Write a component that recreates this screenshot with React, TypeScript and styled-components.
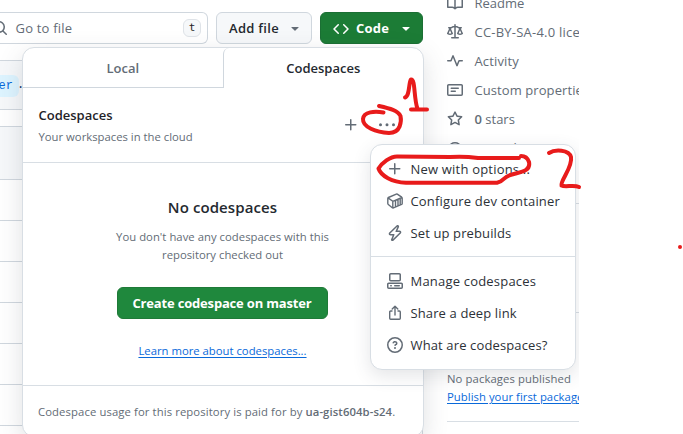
import React from "react";
import styled, { createGlobalStyle, css } from "styled-components";

const GlobalStyle = createGlobalStyle`
  * { box-sizing: border-box; }
  body { margin: 0; background: #fff; overflow: hidden; }
`;

const Screen = styled.div`
  position: relative;
  width: 683px;
  height: 434px;
  overflow: hidden;
  background: #fff;
  color: #1f2328;
  font: 400 13px/20px "Open Sans", "Noto Sans", sans-serif;
`;

const Page = styled.div`
  position: relative;
  display: flex;
  width: 579px;
  height: 434px;
  overflow: hidden;
`;

const Label = styled.span<{ $track?: number }>`
  white-space: nowrap;
  letter-spacing: ${(p) => p.$track ?? 0}px;
`;

const Main = styled.main`
  width: 423px;
  flex: none;
  padding-top: 12px;
`;

const Toolbar = styled.div`
  display: flex;
  height: 32px;
`;

const SearchBox = styled.div`
  display: flex;
  align-items: center;
  width: 208px;
  margin-right: 8px;
  padding-right: 6px;
  border: 1px solid #d0d7de;
  border-left: 0;
  border-radius: 0 6px 6px 0;
  color: #636c76;

  svg { margin-left: -8px; margin-right: 7.5px; }
`;

const Key = styled.kbd`
  width: 18px;
  height: 18px;
  margin-left: auto;
  border: 1px solid #dfe3e8;
  border-radius: 6px;
  background: #f6f8fa;
  color: #1f2328;
  font: 11px/15px "DejaVu Sans Mono", monospace;
  text-align: center;
`;

const Button = styled.button<{ $kind: "plain" | "primary" | "create" }>`
  display: flex;
  align-items: center;
  height: 32px;
  margin: 0;
  padding: 0 0 1px;
  border: 1px solid #d0d7de;
  border-radius: 6px;
  background: #f6f8fa;
  color: #24292f;
  font: 600 13px/20px "Open Sans", "Noto Sans", sans-serif;

  ${(p) => p.$kind === "plain" && css`
    width: 96px;
    margin-right: 8px;
    padding-left: 12px;
    svg { margin-left: auto; margin-right: 8px; color: #636c76; }
  `}
  ${(p) => p.$kind === "primary" && css`
    width: 103px;
    padding-left: 12px;
    border-color: #1b6f34;
    background: #1c7c36;
    color: #fff;
    font-weight: 700;
    svg:first-child { margin: 2px 7px 0 0; }
    svg:last-child { margin-left: auto; margin-right: 8px; }
  `}
  ${(p) => p.$kind === "create" && css`
    width: 211px;
    justify-content: center;
    margin: 23px 1px 23px 0;
    border-color: #1f7a38;
    background: #1f883d;
    color: #fff;
    font-weight: 700;
  `}
`;

const CommitBar = styled.div`
  display: flex;
  align-items: center;
  height: 50px;
  margin-top: 16px;
  border: solid #d0d7de;
  border-width: 1px 0;
  background: #f6f8fa;
  font: 12px/20px "Liberation Mono", monospace;
  color: #0a3069;
`;

const CodeChip = styled.span`
  display: flex;
  justify-content: flex-end;
  align-items: center;
  width: 19px;
  height: 22px;
  margin: 2px -2px 0 0;
  padding-right: 6px;
  border-radius: 0 6px 6px 0;
  background: #ddf4ff;
  color: #0969da;
`;

const Files = styled.div`
  margin-top: 16px;
  border: solid #d0d7de;
  border-width: 1px 1px 0 0;
`;

const FileRow = styled.div<{ $head?: boolean }>`
  height: ${(p) => (p.$head ? 53 : 41)}px;
  border-bottom: 1px solid #d0d7de;
  background: ${(p) => (p.$head ? "#f6f8fa" : "#fff")};
`;

const Sidebar = styled.aside`
  flex: none;
  width: 180px;
  margin-left: 24px;
  color: #636c76;
`;

const Facts = styled.ul`
  height: 211px;
  margin: -7px 0 0;
  padding: 0;
  list-style: none;
  border-bottom: 1px solid #d8dee4;
`;

const Fact = styled.li`
  display: flex;
  align-items: center;
  gap: 11.5px;
  height: 20px;
  margin-bottom: 9px;
  b { font-weight: 600; }
`;

const Releases = styled.div`
  height: 109px;
  border-bottom: 1px solid #d8dee4;
`;

const Packages = styled.div`
  display: flex;
  flex-direction: column;
  height: 109px;
  padding-top: 57px;
  border-bottom: 1px solid #d8dee4;
  font-size: 11.3px;
  line-height: 18px;
`;

const Link = styled.a<{ $track?: number }>`
  color: #0969da;
  letter-spacing: ${(p) => p.$track ?? 0}px;
  text-decoration: underline;
  text-underline-offset: 2px;
  white-space: nowrap;
`;

const Popover = styled.section`
  position: absolute;
  left: 22px;
  top: 47px;
  width: 402px;
  height: 390px;
  border: 1px solid #d8dee4;
  border-radius: 12px;
  background: #fff;
  box-shadow: 0 8px 24px rgba(66, 74, 83, 0.17);
`;

const Tabs = styled.div`
  display: flex;
  height: 40px;
`;

const Tab = styled.div<{ $active?: boolean }>`
  flex: 1;
  font-weight: 600;
  line-height: 41px;
  text-align: center;
  color: ${(p) => (p.$active ? "#24292f" : "#636c76")};
  ${(p) => p.$active
    ? css`border-left: 1px solid #d0d7de; border-radius: 6px 0 0 0;`
    : css`border-bottom: 1px solid #d0d7de;`}
`;

const Heading = styled.header`
  display: flex;
  align-items: center;
  height: 75px;
  padding: 0 28px 0 15.5px;
  border-bottom: 1px solid #d8dee4;
  color: #636c76;
`;

const Titles = styled.div`
  display: flex;
  flex-direction: column;
  flex: 1;
  margin-top: 2px;
  font-size: 11.3px;
`;

const Title = styled(Label)`
  line-height: 20px;
  margin-bottom: 2px;
  color: #1f2328;
  font-size: 13px;
  font-weight: 600;
`;

const Actions = styled.div`
  display: flex;
  gap: 20px;
  margin-top: -1px;
`;

const Blank = styled.div`
  display: flex;
  flex-direction: column;
  align-items: center;
  height: 223px;
  padding: 33px 1px 0 0;
  border-bottom: 1px solid #d8dee4;
  color: #636c76;
  font-size: 11.3px;
  line-height: 18px;
`;

const BlankTitle = styled.h4`
  margin: -1px 0 9px;
  color: #24292f;
  font-size: 15px;
  font-weight: 600;
  line-height: 24px;
`;

const Footer = styled.footer`
  padding: 16px 15px;
  color: #636c76;
  font-size: 11.3px;
  b { font-weight: 600; }
`;

const Menu = styled.div`
  position: absolute;
  left: 370px;
  top: 144px;
  width: 206px;
  height: 226px;
  padding: 8px 0;
  border: 1px solid #d8dee4;
  border-radius: 12px;
  background: #fff;
  box-shadow: 0 6px 18px rgba(66, 74, 83, 0.14);
`;

const MenuItem = styled.div`
  display: flex;
  align-items: center;
  gap: 7.5px;
  height: 32px;
  padding-left: 16px;
  color: #2c3137;
  svg { color: #636c76; }
`;

const Divider = styled.hr`
  height: 1px;
  margin: 7px 0 8px;
  border: 0;
  background: #d8dee4;
`;

const Ink = styled.svg`
  position: absolute;
  inset: 0;
  fill: none;
  stroke: #e81b1b;
  stroke-width: 4;
  stroke-linecap: round;
  stroke-linejoin: round;
`;

const Svg = styled.svg`
  display: block;
  flex: none;
  fill: currentColor;
`;

const LineSvg = styled(Svg)`
  fill: none;
  stroke: currentColor;
  stroke-width: 1.4;
  stroke-linecap: round;
  stroke-linejoin: round;
`;

const PATHS = {
  search: "M10.68 11.74a6 6 0 0 1-7.922-8.982 6 6 0 0 1 8.982 7.922l3.04 3.04a.749.749 0 0 1-.326 1.275.749.749 0 0 1-.734-.215ZM11.5 7a4.499 4.499 0 1 0-8.997 0A4.499 4.499 0 0 0 11.5 7Z",
  triangle: "m4.427 7.427 3.396 3.396a.25.25 0 0 0 .354 0l3.396-3.396A.25.25 0 0 0 11.396 7H4.604a.25.25 0 0 0-.177.427Z",
  code: "m11.28 3.22 4.25 4.25a.75.75 0 0 1 0 1.06l-4.25 4.25a.749.749 0 0 1-1.275-.326.749.749 0 0 1 .215-.734L13.94 8l-3.72-3.72a.749.749 0 0 1 .326-1.275.749.749 0 0 1 .734.215Zm-6.56 0a.751.751 0 0 1 1.042.018.751.751 0 0 1 .018 1.042L2.06 8l3.72 3.72a.749.749 0 0 1-.326 1.275.749.749 0 0 1-.734-.215L.47 8.53a.75.75 0 0 1 0-1.06Z",
  plus: "M7.75 2a.75.75 0 0 1 .75.75V7h4.25a.75.75 0 0 1 0 1.5H8.5v4.25a.75.75 0 0 1-1.5 0V8.5H2.75a.75.75 0 0 1 0-1.5H7V2.75A.75.75 0 0 1 7.75 2Z",
  kebab: "M8 9.2a1.5 1.5 0 1 0 0-3 1.5 1.5 0 0 0 0 3ZM1.5 9.2a1.5 1.5 0 1 0 0-3 1.5 1.5 0 0 0 0 3Zm13 0a1.5 1.5 0 1 0 0-3 1.5 1.5 0 0 0 0 3Z",
  book: "M0 1.75A.75.75 0 0 1 .75 1h4.253c1.227 0 2.317.59 3 1.501A3.743 3.743 0 0 1 11.006 1h4.245a.75.75 0 0 1 .75.75v10.5a.75.75 0 0 1-.75.75h-4.507a2.25 2.25 0 0 0-1.591.659l-.622.621a.75.75 0 0 1-1.06 0l-.622-.621A2.25 2.25 0 0 0 5.258 13H.75a.75.75 0 0 1-.75-.75Zm7.251 10.324.004-5.073-.002-2.253A2.25 2.25 0 0 0 5.003 2.5H1.5v9h3.757a3.75 3.75 0 0 1 1.994.574ZM8.755 4.75l-.004 7.322a3.752 3.752 0 0 1 1.992-.572H14.5v-9h-3.495a2.25 2.25 0 0 0-2.25 2.25Z",
  law: "M8.75.75V2h.985c.304 0 .603.08.867.231l1.29.736c.038.022.08.033.124.033h2.234a.75.75 0 0 1 0 1.5h-.427l2.111 4.692a.75.75 0 0 1-.154.838l-.077.065c-.21.176-.441.327-.686.45C14.556 10.78 13.88 11 13 11a4.498 4.498 0 0 1-2.023-.454 3.544 3.544 0 0 1-.686-.45l-.071-.065a.75.75 0 0 1-.154-.838L12.178 4.5h-.162c-.305 0-.604-.079-.868-.231l-1.29-.736a.245.245 0 0 0-.124-.033H8.75V13h2.5a.75.75 0 0 1 0 1.5h-6.5a.75.75 0 0 1 0-1.5h2.5V3.5h-.984a.245.245 0 0 0-.124.033l-1.289.737c-.265.15-.564.23-.869.23h-.162l2.112 4.692a.75.75 0 0 1-.154.838l-.071.065c-.21.176-.441.327-.686.45C4.556 10.78 3.88 11 3 11a4.498 4.498 0 0 1-2.023-.454 3.544 3.544 0 0 1-.686-.45l-.071-.065a.75.75 0 0 1-.154-.838L2.178 4.5H1.75a.75.75 0 0 1 0-1.5h2.234a.249.249 0 0 0 .125-.033l1.288-.737c.265-.15.564-.23.869-.23h.984V.75a.75.75 0 0 1 1.5 0Zm2.945 8.477c.285.135.718.273 1.305.273s1.02-.138 1.305-.273L13 6.327Zm-10 0c.285.135.718.273 1.305.273s1.02-.138 1.305-.273L3 6.327Z",
  pulse: "M6 2c.306 0 .582.187.696.471L10 10.731l1.304-3.26A.751.751 0 0 1 12 7h3.25a.75.75 0 0 1 0 1.5h-2.742l-1.812 4.528a.751.751 0 0 1-1.392 0L6 4.77 4.696 8.03A.75.75 0 0 1 4 8.5H.75a.75.75 0 0 1 0-1.5h2.742l1.812-4.529A.751.751 0 0 1 6 2Z",
  note: "M0 3.75C0 2.784.784 2 1.75 2h12.5c.966 0 1.75.784 1.75 1.75v8.5A1.75 1.75 0 0 1 14.25 14H1.75A1.75 1.75 0 0 1 0 12.25Zm1.75-.25a.25.25 0 0 0-.25.25v8.5c0 .138.112.25.25.25h12.5a.25.25 0 0 0 .25-.25v-8.5a.25.25 0 0 0-.25-.25ZM3.5 6.25a.75.75 0 0 1 .75-.75h7a.75.75 0 0 1 0 1.5h-7a.75.75 0 0 1-.75-.75Zm.75 2.25h4a.75.75 0 0 1 0 1.5h-4a.75.75 0 0 1 0-1.5Z",
  star: "M8 .25a.75.75 0 0 1 .673.418l1.882 3.815 4.21.612a.75.75 0 0 1 .416 1.279l-3.046 2.97.719 4.192a.751.751 0 0 1-1.088.791L8 12.347l-3.766 1.98a.75.75 0 0 1-1.088-.79l.72-4.194L.818 6.374a.75.75 0 0 1 .416-1.28l4.21-.611L7.327.668A.75.75 0 0 1 8 .25Zm0 2.445L6.615 5.5a.75.75 0 0 1-.564.41l-3.097.45 2.24 2.184a.75.75 0 0 1 .216.664l-.528 3.084 2.769-1.456a.75.75 0 0 1 .698 0l2.77 1.456-.53-3.084a.75.75 0 0 1 .216-.664l2.24-2.183-3.096-.45a.75.75 0 0 1-.564-.41L8 2.694Z",
  zap: "M9.504.43a1.516 1.516 0 0 1 2.437 1.713L10.415 5.5h2.123c1.57 0 2.346 1.909 1.22 3.004l-7.34 7.142a1.249 1.249 0 0 1-.871.354h-.302a1.25 1.25 0 0 1-1.157-1.723L5.633 10.5H3.462c-1.57 0-2.346-1.909-1.22-3.004L9.503.429Zm1.047 1.074L3.286 8.571A.25.25 0 0 0 3.462 9H6.75a.75.75 0 0 1 .694 1.034l-1.713 4.188 6.982-6.793A.25.25 0 0 0 12.538 7H9.25a.75.75 0 0 1-.683-1.06l2.008-4.418.003-.006a.036.036 0 0 0-.004-.009l-.006-.006-.008-.001c-.003 0-.006.002-.009.004Z",
  codespaces: "M0 11.25c0-.966.784-1.75 1.75-1.75h12.5c.966 0 1.75.784 1.75 1.75v3A1.75 1.75 0 0 1 14.25 16H1.75A1.75 1.75 0 0 1 0 14.25Zm2-9.5C2 .784 2.784 0 3.75 0h8.5C13.216 0 14 .784 14 1.75v5a1.75 1.75 0 0 1-1.75 1.75h-8.5A1.75 1.75 0 0 1 2 6.75Zm1.75-.25a.25.25 0 0 0-.25.25v5c0 .138.112.25.25.25h8.5a.25.25 0 0 0 .25-.25v-5a.25.25 0 0 0-.25-.25Zm-2 9.5a.25.25 0 0 0-.25.25v3c0 .138.112.25.25.25h12.5a.25.25 0 0 0 .25-.25v-3a.25.25 0 0 0-.25-.25ZM7 12.75a.75.75 0 0 1 .75-.75h4.5a.75.75 0 0 1 0 1.5h-4.5a.75.75 0 0 1-.75-.75Zm-4 0a.75.75 0 0 1 .75-.75h.5a.75.75 0 0 1 0 1.5h-.5a.75.75 0 0 1-.75-.75Z",
  question: "M0 8a8 8 0 1 1 16 0A8 8 0 0 1 0 8Zm8-6.5a6.5 6.5 0 1 0 0 13 6.5 6.5 0 0 0 0-13ZM6.92 6.085h.001a.749.749 0 1 1-1.342-.67c.169-.339.436-.701.849-.977C6.845 4.16 7.369 4 8 4a2.756 2.756 0 0 1 1.637.525c.503.377.863.965.863 1.725 0 .448-.115.83-.329 1.15-.205.307-.47.513-.692.662-.109.072-.22.138-.313.195l-.006.004a6.24 6.24 0 0 0-.26.16.952.952 0 0 0-.276.245.75.75 0 0 1-1.248-.832c.184-.264.42-.489.692-.661.103-.067.207-.132.313-.195l.007-.004c.1-.061.182-.11.258-.161a.969.969 0 0 0 .277-.245C8.96 6.514 9 6.427 9 6.25a.612.612 0 0 0-.262-.525A1.27 1.27 0 0 0 8 5.5c-.369 0-.595.09-.74.187a1.01 1.01 0 0 0-.34.398ZM9 11a1 1 0 1 1-2 0 1 1 0 0 1 2 0Z",
};

const LINES = {
  eye: "M.8 8C2.5 4.8 5 2.8 8 2.8S13.5 4.8 15.2 8C13.5 11.2 11 13.2 8 13.2S2.5 11.2.8 8ZM10 8a2 2 0 1 1-4 0 2 2 0 0 1 4 0Z",
  container: "M9.3 1.1 1.4 4.5Q.8 4.8.8 5.5V10.5Q.8 11.1 1.3 11.5L5.3 14.8Q5.8 15.2 6.4 14.9L14.6 11.4Q15.2 11.1 15.2 10.4V5.2Q15.2 4.6 14.7 4.2L10.3 1.2Q9.8.9 9.3 1.1ZM1 4.9 5.8 8.3V14.9M5.8 8.3 15 4.5M8.5 7.3V13.8M11 6.3V12.8M13.2 5.4V11.8",
  share: "M5 6H3.7Q2.7 6 2.7 7V13.3Q2.7 14.3 3.7 14.3H12.3Q13.3 14.3 13.3 13.3V7Q13.3 6 12.3 6H11M8 10V1.5M5.2 4 8 1.2 10.8 4",
};

const Icon = ({ name }: { name: keyof typeof PATHS }) => (
  <Svg width={16} height={16} viewBox="0 0 16 16"><path d={PATHS[name]} /></Svg>
);
const LineIcon = ({ name }: { name: keyof typeof LINES }) => (
  <LineSvg width={16} height={16} viewBox="0 0 16 16"><path d={LINES[name]} /></LineSvg>
);

export default function App() {
  return (
    <Screen>
      <GlobalStyle />
      <Page>
        <Main>
          <Toolbar>
            <SearchBox>
              <Icon name="search" />
              <Label $track={0.2}>Go to file</Label>
              <Key>t</Key>
            </SearchBox>
            <Button $kind="plain"><Label $track={0.3}>Add file</Label><Icon name="triangle" /></Button>
            <Button $kind="primary"><Icon name="code" /><Label $track={0.2}>Code</Label><Icon name="triangle" /></Button>
          </Toolbar>
          <CommitBar><CodeChip>er</CodeChip>.</CommitBar>
          <Files>
            <FileRow $head />
            {[1, 2, 3, 4, 5, 6, 7].map((n) => <FileRow key={n} />)}
          </Files>
        </Main>
        <Sidebar>
          <Facts>
            <Fact><Icon name="book" /><Label>Readme</Label></Fact>
            <Fact><Icon name="law" /><Label $track={0.22}>CC-BY-SA-4.0 license</Label></Fact>
            <Fact><Icon name="pulse" /><Label $track={0.15}>Activity</Label></Fact>
            <Fact><Icon name="note" /><Label $track={0.08}>Custom properties</Label></Fact>
            <Fact><Icon name="star" /><Label><b>0</b> stars</Label></Fact>
            <Fact><LineIcon name="eye" /><Label><b>0</b> watching</Label></Fact>
          </Facts>
          <Releases />
          <Packages>
            <Label $track={0.1}>No packages published</Label>
            <Link $track={0.04}>Publish your first package</Link>
          </Packages>
        </Sidebar>
        <Popover>
          <Tabs>
            <Tab><Label>Local</Label></Tab>
            <Tab $active><Label>Codespaces</Label></Tab>
          </Tabs>
          <Heading>
            <Titles>
              <Title>Codespaces</Title>
              <Label>Your workspaces in the cloud</Label>
            </Titles>
            <Actions><Icon name="plus" /><Icon name="kebab" /></Actions>
          </Heading>
          <Blank>
            <BlankTitle><Label $track={0.1}>No codespaces</Label></BlankTitle>
            <Label $track={0.03}>You don't have any codespaces with this</Label>
            <Label>repository checked out</Label>
            <Button $kind="create"><Label $track={-0.18}>Create codespace on master</Label></Button>
            <Link>Learn more about codespaces...</Link>
          </Blank>
          <Footer><Label $track={0.1}>Codespace usage for this repository is paid for by <b>ua-gist604b-s24</b>.</Label></Footer>
        </Popover>
        <Menu>
          <MenuItem><Icon name="plus" /><Label $track={0.2}>New with options...</Label></MenuItem>
          <MenuItem><LineIcon name="container" /><Label $track={0.17}>Configure dev container</Label></MenuItem>
          <MenuItem><Icon name="zap" /><Label $track={0.12}>Set up prebuilds</Label></MenuItem>
          <Divider />
          <MenuItem><Icon name="codespaces" /><Label $track={0.2}>Manage codespaces</Label></MenuItem>
          <MenuItem><LineIcon name="share" /><Label $track={0.12}>Share a deep link</Label></MenuItem>
          <MenuItem><Icon name="question" /><Label $track={0.13}>What are codespaces?</Label></MenuItem>
        </Menu>
      </Page>
      <Ink width="683" height="434">
        <path d="M383.5 112.5C375 111 363.5 111.5 363 119C362.5 127 376 132.5 389 133C401 133 401.5 121 400.5 116C398 110.5 390 108.5 379 106" />
        <path d="M405 97.5C410 96 408.5 82 411 79.5C415.5 79 413.5 97 417.5 109M411 109.5H427" />
        <path d="M519 158H478Q464 156 450 157L397 156.5C390 156.5 382 163 378.5 168.5C381 176 392 182 406 182.8H497C505 181 502 177 512 174.5C520 172 531 171.5 529 162Q527 156 521 156" />
        <path d="M549 153C555 149 569 149.5 571 157C573 167 560 181 561.5 185.5C565 187.5 574 184.5 579 187" />
        <path d="M680 247v.01" />
      </Ink>
    </Screen>
  );
}
